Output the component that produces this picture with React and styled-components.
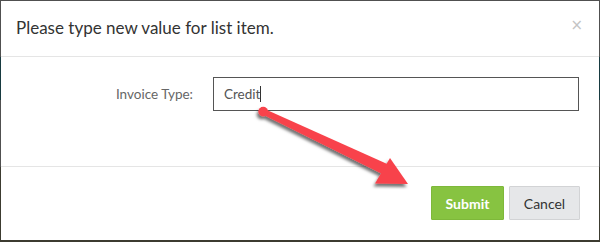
import React from "react";
import styled, { createGlobalStyle } from "styled-components";

const Global = createGlobalStyle`
  html, body { margin: 0; padding: 0; background: #fff; }
  body { font-family: "Lato", "Noto Sans", sans-serif; }
  * { box-sizing: border-box; }
`;

const Frame = styled.div`
  position: relative;
  width: 600px;
  height: 242px;
  padding: 1px 1px 2px 1px;
  background: linear-gradient(
    to bottom,
    #505050 0 57px,
    #173a40 57px 100px,
    #505050 100px 167px,
    #3c3b30 167px
  );
  overflow: hidden;
`;

const Modal = styled.div`
  height: 100%;
  background: #fff;
  display: flex;
  flex-direction: column;
`;

const Header = styled.div`
  height: 56px;
  display: flex;
  align-items: center;
  justify-content: space-between;
  padding: 0 16px 2px 15px;
  border-bottom: 1px solid #e5e5e5;
`;

const Title = styled.h4`
  margin: 0;
  font-size: 17px;
  font-weight: 400;
  color: #333;
`;

const Close = styled.span`
  font-family: "DejaVu Sans", sans-serif;
  font-size: 15px;
  color: #c4c4c4;
  line-height: 1;
  margin-top: -4px;
`;

const Body = styled.div`
  height: 110px;
  padding: 20px 20px 0 0;
  border-bottom: 1px solid #e5e5e5;
`;

const Row = styled.div`
  display: grid;
  grid-template-columns: 192px 1fr;
  column-gap: 20px;
  align-items: center;
`;

const Label = styled.label`
  text-align: right;
  font-size: 13.5px;
  color: #666;
`;

const Field = styled.div`
  height: 34px;
  border: 1px solid #555;
  display: flex;
  align-items: center;
  padding: 0 10px;
  font-size: 13.5px;
  color: #555;
`;

const Caret = styled.span`
  display: inline-block;
  width: 1px;
  height: 16px;
  background: #333;
  margin-left: 0px;
`;

const Footer = styled.div`
  flex: 1;
  display: flex;
  justify-content: flex-end;
  align-items: flex-start;
  gap: 5px;
  padding: 19px 19px 0 0;
`;

const Button = styled.button`
  height: 34px;
  width: ${(p) => p.$w}px;
  font-family: inherit;
  font-size: 14px;
  font-weight: ${(p) => (p.$primary ? 700 : 400)};
  color: ${(p) => (p.$primary ? "#fff" : "#333")};
  background: ${(p) => (p.$primary ? "#87c341" : "#e6e7e9")};
  border: 1px solid ${(p) => (p.$primary ? "#7eb83a" : "#d2d3d5")};
  border-radius: 1px;
  padding: 0;
`;

const ArrowLayer = styled.svg`
  position: absolute;
  left: 0;
  top: 0;
  pointer-events: none;
`;

function Arrow() {
  return (
    <ArrowLayer width="600" height="242" viewBox="0 0 600 242">
      <defs>
        <filter id="sh" x="-20%" y="-20%" width="140%" height="160%">
          <feDropShadow dx="-1.5" dy="3" stdDeviation="1.6" floodColor="#000" floodOpacity="0.55" />
        </filter>
      </defs>
      <g filter="url(#sh)" fill="#f8434b">
        <polygon points="260.8,107.2 265.6,116.0 386.2,176.0 390.6,165.4" />
        <circle cx="263.2" cy="111.6" r="4.9" />
        <polygon points="390,158 375,183.5 408,184" />
      </g>
    </ArrowLayer>
  );
}

export default function App() {
  return (
    <>
      <Global />
      <Frame>
        <Modal>
          <Header>
            <Title>Please type new value for list item.</Title>
            <Close>×</Close>
          </Header>
          <Body>
            <Row>
              <Label>Invoice Type:</Label>
              <Field>
                Credit
                <Caret />
              </Field>
            </Row>
          </Body>
          <Footer>
            <Button $primary $w={73}>Submit</Button>
            <Button $w={71}>Cancel</Button>
          </Footer>
        </Modal>
        <Arrow />
      </Frame>
    </>
  );
}
